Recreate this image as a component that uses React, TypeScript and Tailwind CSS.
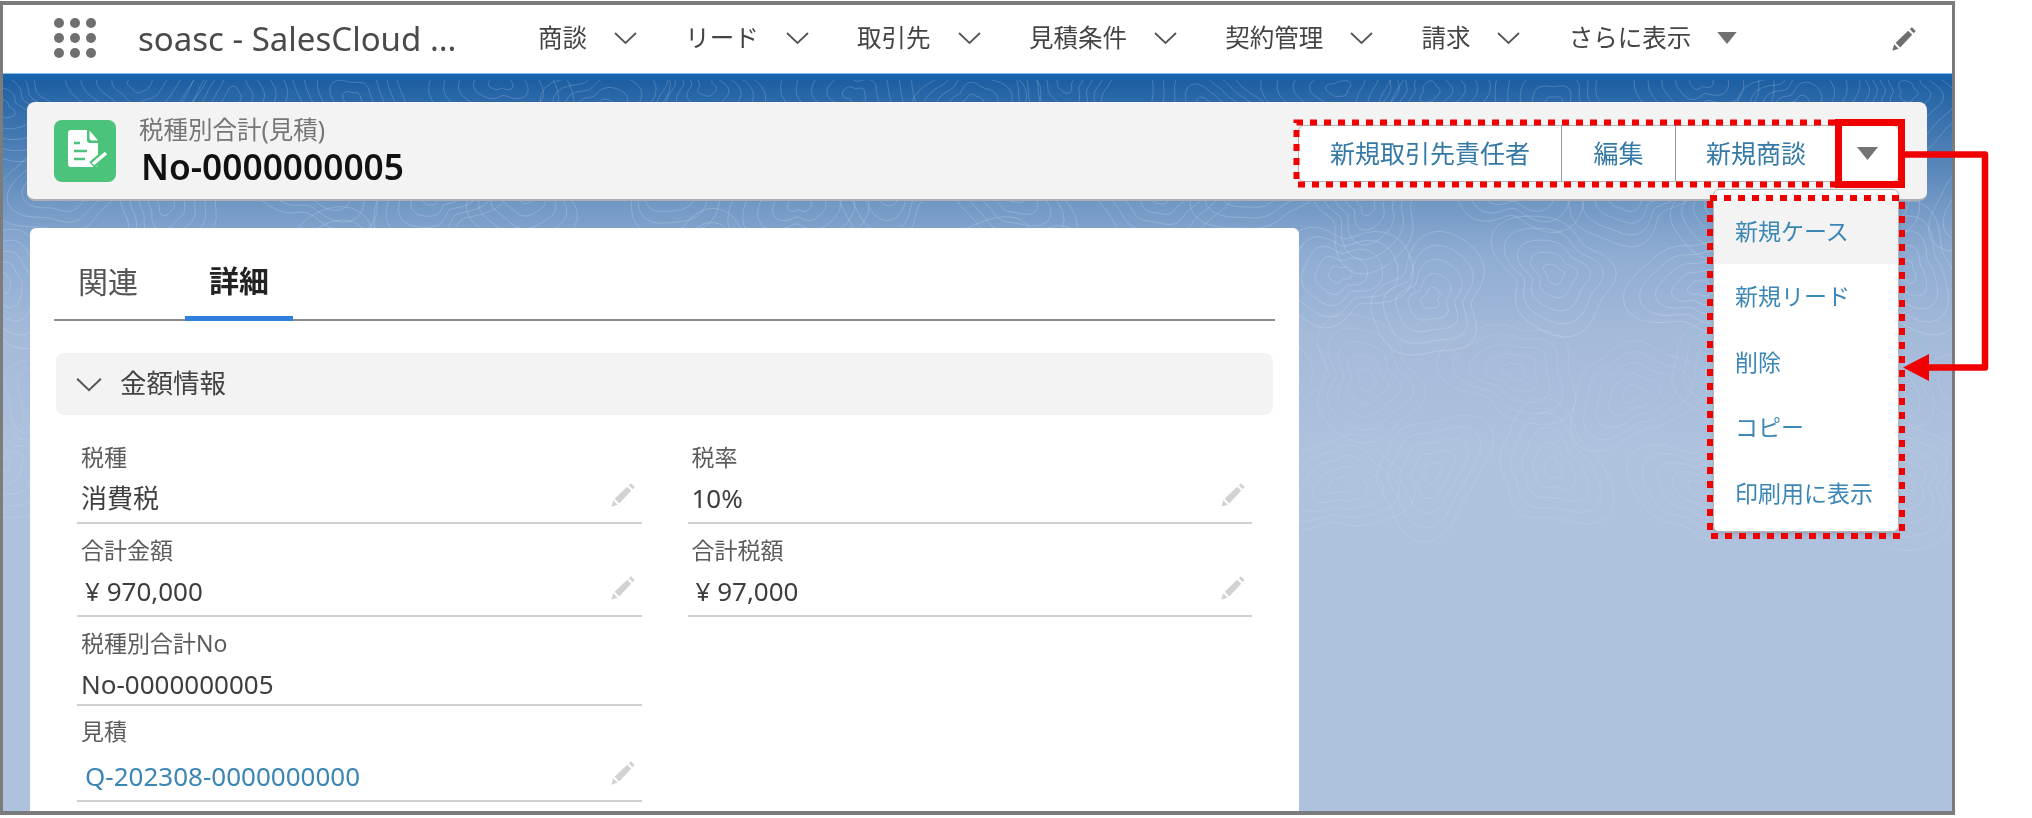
import React from "react";

const JP = "font-['Noto_Sans','Noto_Sans_CJK_JP',sans-serif]";

const navItems = ["商談", "リード", "取引先", "見積条件", "契約管理", "請求"];
const actions = [
  { label: "新規取引先責任者", width: "w-[263px]" },
  { label: "編集", width: "w-[114px]" },
  { label: "新規商談", width: "w-[161px]" },
];
const menuItems = ["新規ケース", "新規リード", "削除", "コピー", "印刷用に表示"];

// Contour rings of the page background
function ring(cx: number, cy: number, r: number, seed: number) {
  const pts: string[] = [];
  for (let i = 0; i < 48; i++) {
    const a = (i / 48) * Math.PI * 2;
    const w =
      1 +
      0.2 * Math.sin(a * 2 + seed) +
      0.13 * Math.sin(a * 3 + seed * 1.7) +
      0.07 * Math.sin(a * 5 + seed * 2.3);
    pts.push(`${(cx + Math.cos(a) * r * w * 1.1).toFixed(1)} ${(cy + Math.sin(a) * r * w).toFixed(1)}`);
  }
  return `M${pts.join("L")}Z`;
}

const rings: { d: string; o: number }[] = [];
for (let row = 0; row < 5; row++) {
  for (let col = 0; col < 17; col++) {
    const seed = row * 3.1 + col * 1.9;
    const cx = col * 120 + (row % 2) * 60 + 18 * Math.sin(seed);
    const cy = row * 95 + 15 + 14 * Math.cos(seed * 1.3);
    for (let k = 0; k < 5; k++) {
      rings.push({
        d: ring(cx, cy, 9 + k * 11, seed),
        o: row > 2 ? 0.1 : 0.18,
      });
    }
  }
}

function Chevron({ className }: { className?: string }) {
  return (
    <svg viewBox="0 0 23 12" className={className} fill="none">
      <path d="M1 1 11.5 11 22 1" stroke="currentColor" strokeWidth="1.8" />
    </svg>
  );
}

function Caret({ className }: { className?: string }) {
  return (
    <svg viewBox="0 0 21 13" className={className}>
      <path d="M0 0H21L10.5 13Z" fill="currentColor" />
    </svg>
  );
}

function Pencil({ className }: { className?: string }) {
  return (
    <svg viewBox="0 0 24 24" className={className} fill="currentColor">
      <path d="M2 22 3.6 16.6 7.4 20.4Z" />
      <path d="M4.8 15.2 15.6 5 19 8.4 8.8 19.2Z" />
      <path d="M17 3.6 18.8 2 22 5.2 20.4 7Z" />
    </svg>
  );
}

function RecordIcon() {
  return (
    <div className="w-[62px] h-[62px] rounded-lg bg-[#4cc37a] shrink-0">
      <svg viewBox="0 0 62 62" className="w-full h-full">
        <path d="M17 10H33V20a3 3 0 0 0 3 3H44V44a3 3 0 0 1-3 3H17a3 3 0 0 1-3-3V13a3 3 0 0 1 3-3Z" fill="#fff" />
        <path d="M35.5 10.5 44 20.5H38a2.5 2.5 0 0 1-2.5-2.5Z" fill="#fff" />
        <path d="M20 23H26M20 31H33M20 39H31" stroke="#4cc37a" strokeWidth="2.6" />
        <path d="M38 45 53 32" stroke="#4cc37a" strokeWidth="8" />
        <path d="M39 44 52 33" stroke="#fff" strokeWidth="3.6" />
      </svg>
    </div>
  );
}

type FieldProps = {
  label: string;
  value: string;
  height: string;
  labelTop?: string;
  valueTop?: string;
  editable?: boolean;
  link?: boolean;
  indent?: boolean;
};

function Field({
  label,
  value,
  height,
  labelTop = "pt-3",
  valueTop = "mt-[10px]",
  editable = true,
  link = false,
  indent = false,
}: FieldProps) {
  return (
    <div className={`${height} ${labelTop} pl-1 pr-1 border-b-2 border-[#d0d0d0]`}>
      <div className="text-[23px] leading-[28px] text-[#5c5c5c]">{label}</div>
      <div className={`${valueTop} flex items-center justify-between h-[34px]`}>
        <span
          className={`text-[26px] ${link ? "text-[#3b86b5]" : "text-[#3e3e3e]"} ${indent ? "pl-1" : ""}`}
        >
          {value}
        </span>
        {editable && <Pencil className="w-[28px] h-[28px] mr-[1px] -mt-[7px] text-[#d2d2d2]" />}
      </div>
    </div>
  );
}

export default function App() {
  return (
    <div className={`relative w-[2032px] h-[818px] bg-white overflow-hidden blur-[0.4px] ${JP}`}>
      <div className="w-[1955px] h-[814px] mt-px border-x-[3px] border-t-[4px] border-b-[4px] border-[#7c7c7c] flex flex-col">
        {/* top nav */}
        <div className="h-[69px] shrink-0 bg-white border-b border-[#7cc0ea] flex items-center pl-[51px] text-[#444]">
          <div className="grid grid-cols-3 gap-x-[6px] gap-y-[5px] w-[42px] shrink-0 -mt-[3px]">
            {Array.from({ length: 9 }).map((_, i) => (
              <span key={i} className="w-[10px] h-[10px] rounded-full bg-[#6f6f6f]" />
            ))}
          </div>
          <div className="w-[400px] ml-[42px] shrink-0 text-[33px] leading-[44px] text-[#4a4a4a] whitespace-nowrap">
            soasc - SalesCloud ...
          </div>
          <div className="flex items-center gap-[48.3px] text-[24.5px] -mt-[2px]">
            {navItems.map((item) => (
              <div key={item} className="flex items-center gap-[27px]">
                <span>{item}</span>
                <Chevron className="w-[23px] h-[12px] text-[#555]" />
              </div>
            ))}
            <div className="flex items-center gap-[26px]">
              <span>さらに表示</span>
              <Caret className="w-[20px] h-[12px] text-[#707070]" />
            </div>
          </div>
          <Pencil className="w-[30px] h-[28px] ml-[152px] text-[#6f6f6f]" />
        </div>

        {/* page body */}
        <div className="relative flex-1 min-h-0 overflow-hidden border-t-[6px] border-[#1763ac] bg-[linear-gradient(to_bottom,#1d5fa3_0px,#6f96c3_120px,#8dabd2_170px,#a4bad9_255px,#aec2de_370px)]">
          <svg className="absolute inset-0 w-full h-full" fill="none">
            {rings.map((r, i) => (
              <path key={i} d={r.d} stroke="#fff" strokeOpacity={r.o} strokeWidth="1" />
            ))}
          </svg>

          <div className="relative flex flex-col h-full pt-[22px] pl-[24px] pr-[25px]">
            {/* record header */}
            <div className="relative z-10 h-[99px] shrink-0 flex justify-between rounded-lg bg-[#f3f3f3] border-b-2 border-[#a9b0b8] pl-[27px] pr-[28px]">
              <div className="flex items-center gap-[23px]">
                <RecordIcon />
                <div>
                  <div className="text-[24.5px] leading-[30px] text-[#767676]">税種別合計(見積)</div>
                  <div className="ml-[2px] text-[35.3px] leading-[42px] font-semibold text-[#111]">No-0000000005</div>
                </div>
              </div>
              <div className="relative mt-[23px] h-[57px]">
                <div className="flex h-full rounded-md bg-white border border-[#b5b5b5] text-[25px] text-[#3579a6]">
                  {actions.map((a) => (
                    <div
                      key={a.label}
                      className={`${a.width} flex items-center justify-center border-r border-[#9a9a9a]`}
                    >
                      {a.label}
                    </div>
                  ))}
                  <div className="w-[61px] flex items-center justify-center">
                    <Caret className="w-[21px] h-[13px] text-[#747474]" />
                  </div>
                </div>
                {/* actions menu */}
                <div className="absolute right-0 top-[64px] w-[186px] h-[343px] pt-[8px] rounded-md bg-white border border-[#b5b5b5] shadow-md text-[23px] text-[#3b86b5]">
                  {menuItems.map((m, i) => (
                    <div
                      key={m}
                      className={`h-[65.5px] flex items-center pl-[21px] whitespace-nowrap ${i === 0 ? "bg-[#f3f3f3]" : ""}`}
                    >
                      {m}
                    </div>
                  ))}
                </div>
              </div>
            </div>

            {/* detail card */}
            <div className="mt-[27px] ml-[3px] w-[1269px] flex-1 min-h-0 rounded-t-md bg-white overflow-hidden">
              <div className="mx-[24px] h-[93px] pt-4 flex border-b-2 border-[#8c8c8c] text-[30px]">
                <div className="pr-[47px] flex items-center text-[#555]">
                  <span className="pl-[24px]">関連</span>
                </div>
                <div className="w-[108px] -mb-[2px] flex items-center justify-center font-bold text-[#222] border-b-[5px] border-[#2f80dc]">
                  詳細
                </div>
              </div>

              <div className="mt-[32px] mx-[26px] h-[62px] rounded-lg bg-[#f3f3f3] flex items-center pl-[20px] gap-[18px] text-[26.5px] text-[#444]">
                <Chevron className="w-[26px] h-[15px] text-[#555]" />
                <span>金額情報</span>
              </div>

              <div className="mt-4 ml-[47px] w-[1175px] grid grid-cols-2 gap-x-[46px] items-start">
                <Field label="税種" value="消費税" height="h-[93px]" />
                <Field label="税率" value="10%" height="h-[93px]" />
                <Field label="合計金額" value="¥ 970,000" height="h-[93px]" indent />
                <Field label="合計税額" value="¥ 97,000" height="h-[93px]" indent />
                <Field label="税種別合計No" value="No-0000000005" height="h-[89px]" editable={false} />
                <div />
                <Field
                  label="見積"
                  value="Q-202308-0000000000"
                  height="h-[96px]"
                  labelTop="pt-[11px]"
                  valueTop="mt-[14px]"
                  link
                  indent
                />
              </div>
            </div>
          </div>
        </div>
      </div>

      {/* red callouts drawn over the capture */}
      <svg className="absolute inset-0 w-[2032px] h-[818px] pointer-events-none z-20" fill="none">
        <path d="M1835 122.5H1296.5V184.5H1835" stroke="#f00000" strokeWidth="6" strokeDasharray="7 7" />
        <rect x="1710" y="198" width="192" height="338" stroke="#f00000" strokeWidth="6" strokeDasharray="7 7" />
        <rect x="1838.5" y="122.5" width="63" height="62" stroke="#f00000" strokeWidth="7" />
        <path d="M1905 154.5H1985V367.5H1925" stroke="#f00000" strokeWidth="6.5" strokeLinejoin="round" />
        <path d="M1903 367.5 1929 354V381Z" fill="#f00000" />
      </svg>
    </div>
  );
}
